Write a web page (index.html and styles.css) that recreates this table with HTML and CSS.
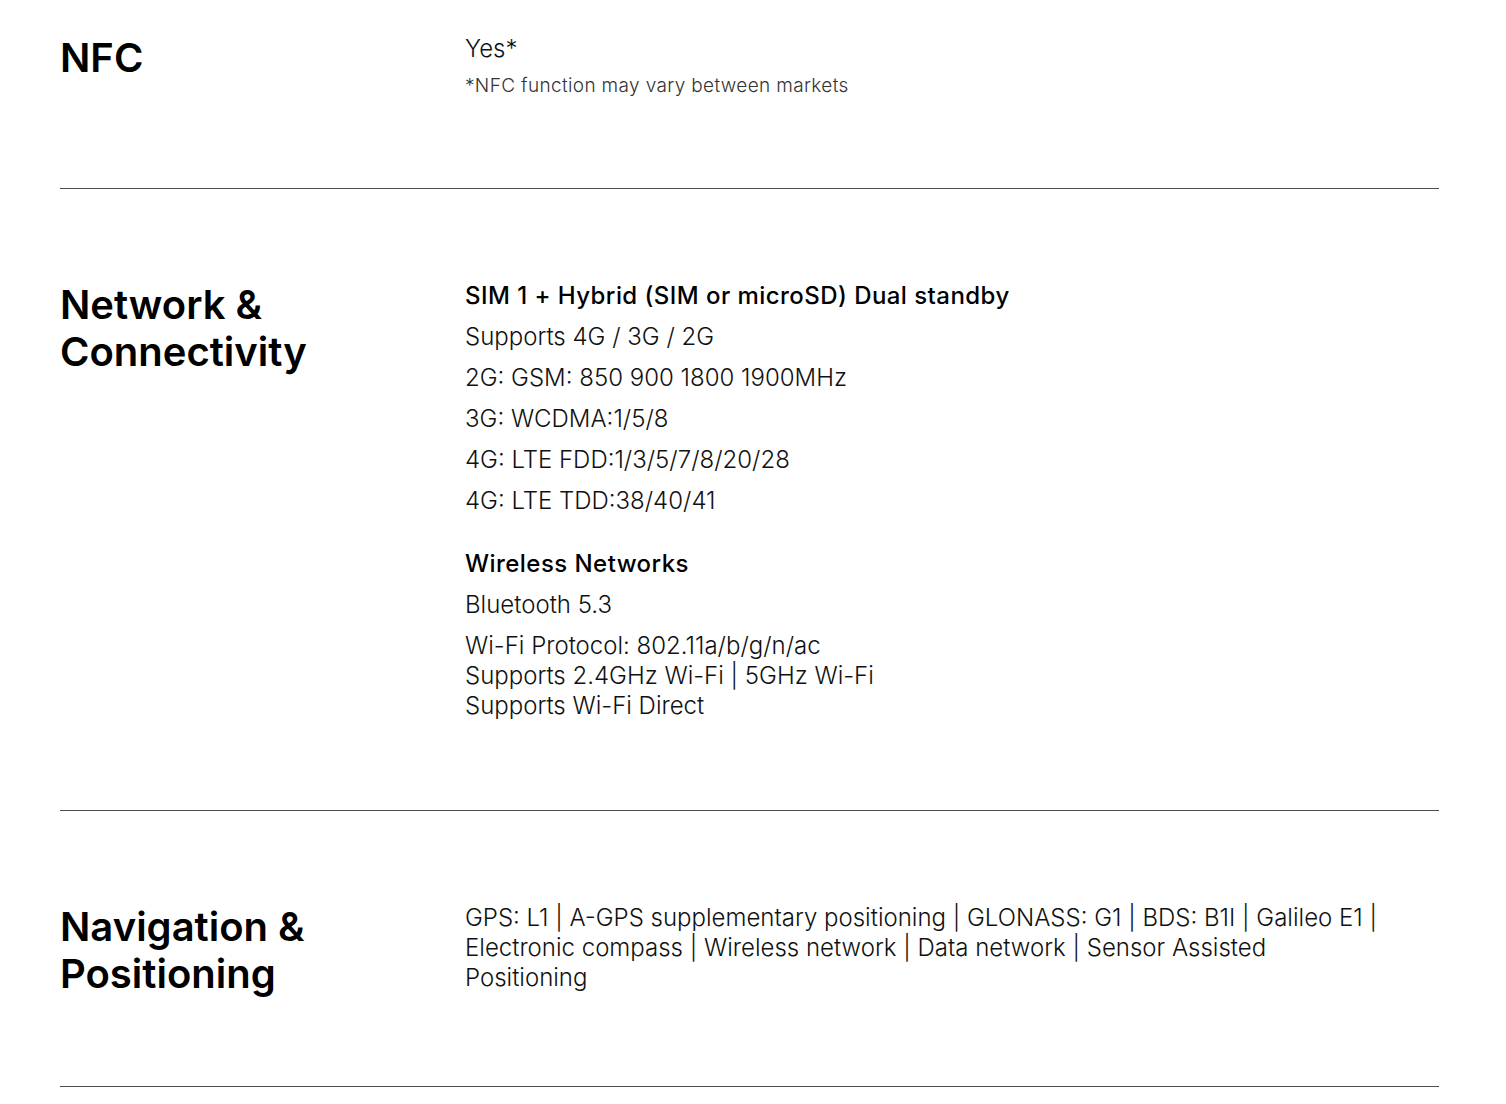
FILE: index.html
```html
<!DOCTYPE html>
<html lang="en">
<head>
<meta charset="utf-8">
<title>Specs</title>
<link rel="stylesheet" href="styles.css">
</head>
<body>
<main class="specs">
  <section class="spec spec--first">
    <h2 class="spec-title">NFC</h2>
    <div class="spec-body">
      <p class="val">Yes*</p>
      <p class="note">*NFC function may vary between markets</p>
    </div>
  </section>
  <section class="spec">
    <h2 class="spec-title">Network &amp;<br>Connectivity</h2>
    <div class="spec-body">
      <h3 class="sub">SIM 1 + Hybrid (SIM or microSD) Dual standby</h3>
      <p class="val">Supports 4G / 3G / 2G</p>
      <p class="val">2G: GSM: 850 900 1800 1900MHz</p>
      <p class="val">3G: WCDMA:1/5/8</p>
      <p class="val">4G: LTE FDD:1/3/5/7/8/20/28</p>
      <p class="val">4G: LTE TDD:38/40/41</p>
      <h3 class="sub sub--gap">Wireless Networks</h3>
      <p class="val">Bluetooth 5.3</p>
      <p class="val">Wi-Fi Protocol: 802.11a/b/g/n/ac<br>Supports 2.4GHz Wi-Fi | 5GHz Wi-Fi<br>Supports Wi-Fi Direct</p>
    </div>
  </section>
  <section class="spec">
    <h2 class="spec-title">Navigation &amp;<br>Positioning</h2>
    <div class="spec-body">
      <p class="val val--wrap">GPS: L1 | A-GPS supplementary positioning | GLONASS: G1 | BDS: B1I | Galileo E1 | Electronic compass | Wireless network | Data network | Sensor Assisted Positioning</p>
    </div>
  </section>
</main>
</body>
</html>
```

FILE: styles.css
```css
* { box-sizing: border-box; }
html, body { margin: 0; padding: 0; background: #fff; }
body {
  font-family: Inter, "Noto Sans", Arial, sans-serif;
  color: #111;
}
.specs {
  margin: 0 67px 0 60px;
}
.spec {
  display: grid;
  grid-template-columns: 405px 1fr;
  padding: 92px 0 89px;
  border-bottom: 1px solid #4d4d4d;
}
.spec--first {
  padding-top: 34px;
  padding-bottom: 90px;
}
.spec-title {
  margin: 0;
  font-size: 40px;
  line-height: 47px;
  font-weight: 600;
  color: #000;
}
.spec-body {
  max-width: 920px;
}
.sub {
  margin: 0 0 11px;
  font-size: 24px;
  line-height: 30px;
  font-weight: 500;
  letter-spacing: 0.45px;
  color: #000;
}
.sub--gap {
  margin-top: 33px;
}
.val {
  margin: 0 0 11px;
  font-size: 24px;
  line-height: 30px;
  font-weight: 300;
}
.val:last-child { margin-bottom: 0; }
.note {
  margin: -1px 0 0;
  font-size: 19px;
  line-height: 24px;
  font-weight: 300;
  letter-spacing: 0.35px;
  color: #333;
}
```
